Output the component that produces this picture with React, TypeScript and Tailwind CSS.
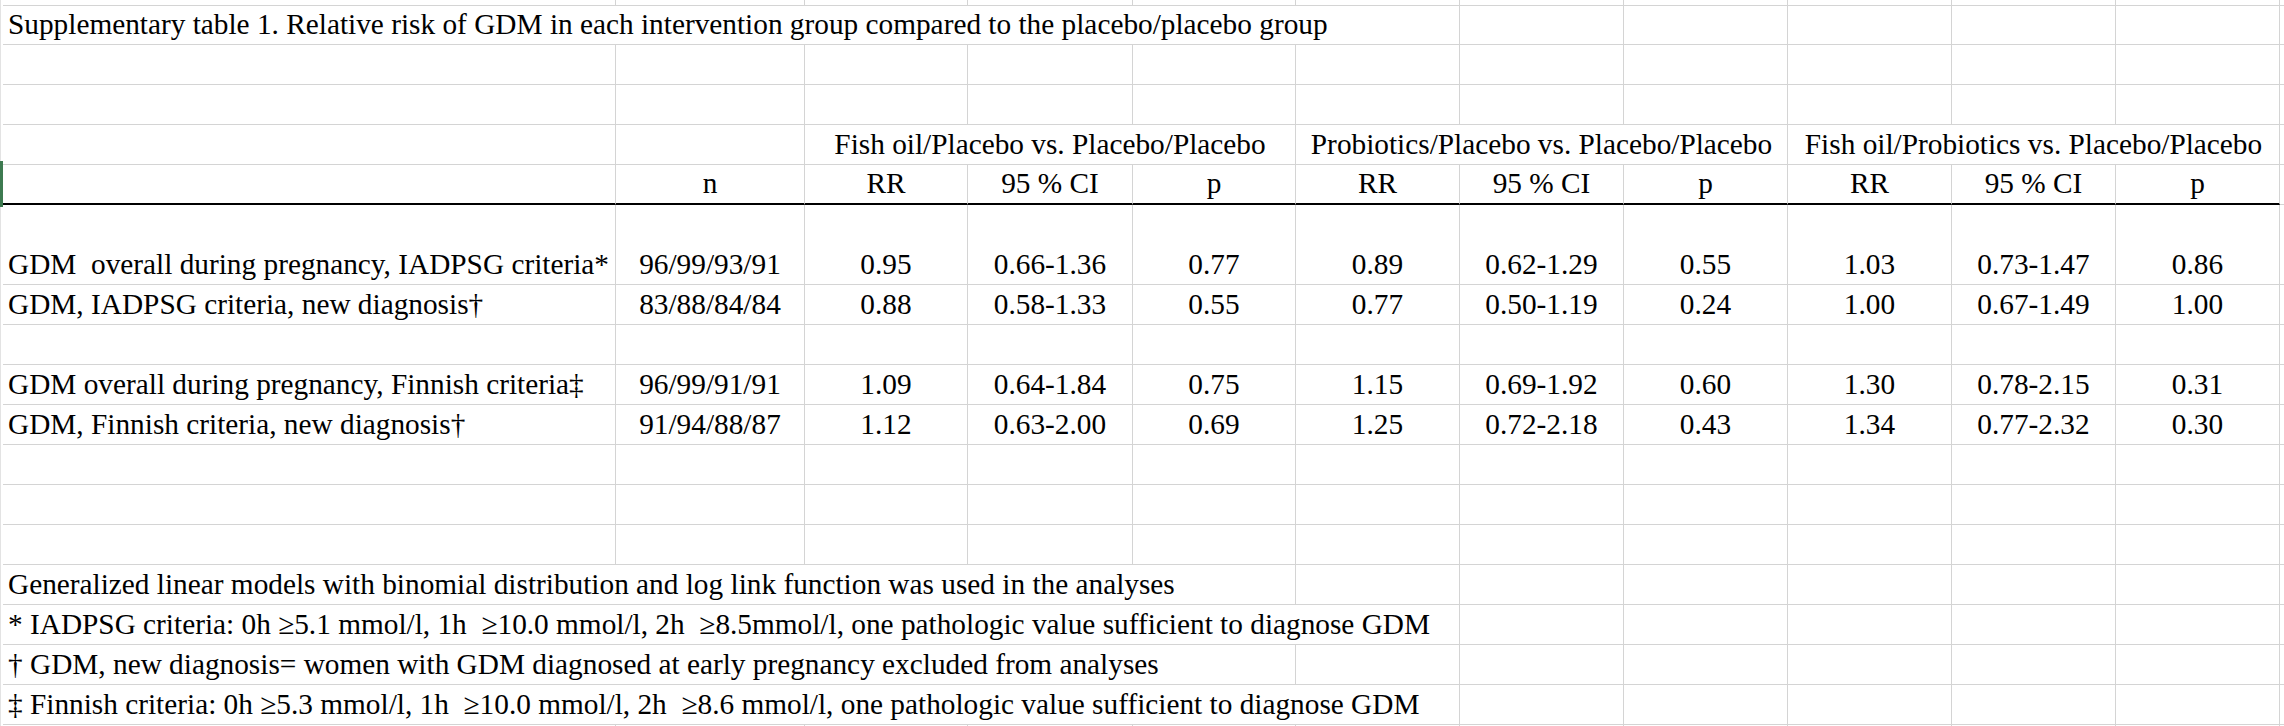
import { Fragment, type ReactNode } from "react";

type Align = "left" | "center";

const spanClass: Record<number, string> = {
  1: "",
  3: "col-span-3",
  5: "col-span-5",
  6: "col-span-6",
};

function Cell({
  children,
  span = 1,
  align = "center",
  thick = false,
  last = false,
}: {
  children?: ReactNode;
  span?: number;
  align?: Align;
  thick?: boolean;
  last?: boolean;
}) {
  const bottom = thick ? "border-b-2 border-b-black" : "border-b border-b-[#d4d4d4]";
  const right = last ? "" : "border-r border-r-[#d4d4d4]";
  const justify = align === "left" ? "justify-start pl-[5px]" : "justify-center";
  return (
    <div
      className={`flex min-w-0 items-end overflow-visible whitespace-pre pb-[5px] leading-none ${bottom} ${right} ${justify} ${spanClass[span]}`}
    >
      {children}
    </div>
  );
}

function Edge() {
  return <div className="border-l border-l-[#e3e3e3]" />;
}

function EmptyRow() {
  return (
    <>
      <Edge />
      {Array.from({ length: 11 }).map((_, i) => (
        <Cell key={i} />
      ))}
      <Cell last />
    </>
  );
}

function NoteRow({ text, span }: { text: string; span: number }) {
  return (
    <>
      <Edge />
      <Cell span={span} align="left">
        {text}
      </Cell>
      {Array.from({ length: 11 - span }).map((_, i) => (
        <Cell key={i} />
      ))}
      <Cell last />
    </>
  );
}

function DataRow({ values }: { values: string[] }) {
  const [label, ...rest] = values;
  return (
    <>
      <Edge />
      <Cell align="left">{label}</Cell>
      {rest.map((v, i) => (
        <Cell key={i}>{v}</Cell>
      ))}
      <Cell last />
    </>
  );
}

const dataRows = {
  iadpsgOverall: [
    "GDM  overall during pregnancy, IADPSG criteria*",
    "96/99/93/91",
    "0.95",
    "0.66-1.36",
    "0.77",
    "0.89",
    "0.62-1.29",
    "0.55",
    "1.03",
    "0.73-1.47",
    "0.86",
  ],
  iadpsgNew: [
    "GDM, IADPSG criteria, new diagnosis†",
    "83/88/84/84",
    "0.88",
    "0.58-1.33",
    "0.55",
    "0.77",
    "0.50-1.19",
    "0.24",
    "1.00",
    "0.67-1.49",
    "1.00",
  ],
  finnishOverall: [
    "GDM overall during pregnancy, Finnish criteria‡",
    "96/99/91/91",
    "1.09",
    "0.64-1.84",
    "0.75",
    "1.15",
    "0.69-1.92",
    "0.60",
    "1.30",
    "0.78-2.15",
    "0.31",
  ],
  finnishNew: [
    "GDM, Finnish criteria, new diagnosis†",
    "91/94/88/87",
    "1.12",
    "0.63-2.00",
    "0.69",
    "1.25",
    "0.72-2.18",
    "0.43",
    "1.34",
    "0.77-2.32",
    "0.30",
  ],
};

const groups = [
  "Fish oil/Placebo vs. Placebo/Placebo",
  "Probiotics/Placebo vs. Placebo/Placebo",
  "Fish oil/Probiotics vs. Placebo/Placebo",
];

export default function App() {
  return (
    <main className="relative h-[726px] w-[2284px] overflow-hidden bg-white text-black">
      <div
        className="grid h-[726px] grid-cols-[3px_613px_189px_163px_165px_163px_164px_164px_164px_164px_164px_164px_1fr] grid-rows-[5px_repeat(5,40px)_80px_repeat(11,40px)_1fr] text-[29.3px]"
        style={{ fontFamily: '"Liberation Serif", "Times New Roman", serif' }}
      >
        {/* row above the title, cut off */}
        <EmptyRow />

        <Edge />
        <Cell span={6} align="left">
          Supplementary table 1. Relative risk of GDM in each intervention group compared to the placebo/placebo group
        </Cell>
        {Array.from({ length: 5 }).map((_, i) => (
          <Cell key={i} />
        ))}
        <Cell last />

        <EmptyRow />
        <EmptyRow />

        {/* group headers, centred across three columns */}
        <Edge />
        <Cell />
        <Cell />
        {groups.map((g) => (
          <Cell key={g} span={3}>
            {g}
          </Cell>
        ))}
        <Cell last />

        <Edge />
        <Cell thick />
        <Cell thick>n</Cell>
        {groups.map((g) => (
          <Fragment key={g}>
            <Cell thick>RR</Cell>
            <Cell thick>95 % CI</Cell>
            <Cell thick>p</Cell>
          </Fragment>
        ))}
        <Cell last />

        <DataRow values={dataRows.iadpsgOverall} />
        <DataRow values={dataRows.iadpsgNew} />
        <EmptyRow />
        <DataRow values={dataRows.finnishOverall} />
        <DataRow values={dataRows.finnishNew} />
        <EmptyRow />
        <EmptyRow />
        <EmptyRow />

        <NoteRow
          span={5}
          text="Generalized linear models with binomial distribution and log link function was used in the analyses"
        />
        <NoteRow
          span={6}
          text="* IADPSG criteria: 0h ≥5.1 mmol/l, 1h  ≥10.0 mmol/l, 2h  ≥8.5mmol/l, one pathologic value sufficient to diagnose GDM"
        />
        <NoteRow span={5} text="† GDM, new diagnosis= women with GDM diagnosed at early pregnancy excluded from analyses" />
        <NoteRow
          span={6}
          text="‡ Finnish criteria: 0h ≥5.3 mmol/l, 1h  ≥10.0 mmol/l, 2h  ≥8.6 mmol/l, one pathologic value sufficient to diagnose GDM"
        />

        <EmptyRow />
      </div>

      {/* selected row marker */}
      <div className="absolute left-0 top-[161px] h-[46px] w-[3px] bg-[#3d7a50]" />
    </main>
  );
}
